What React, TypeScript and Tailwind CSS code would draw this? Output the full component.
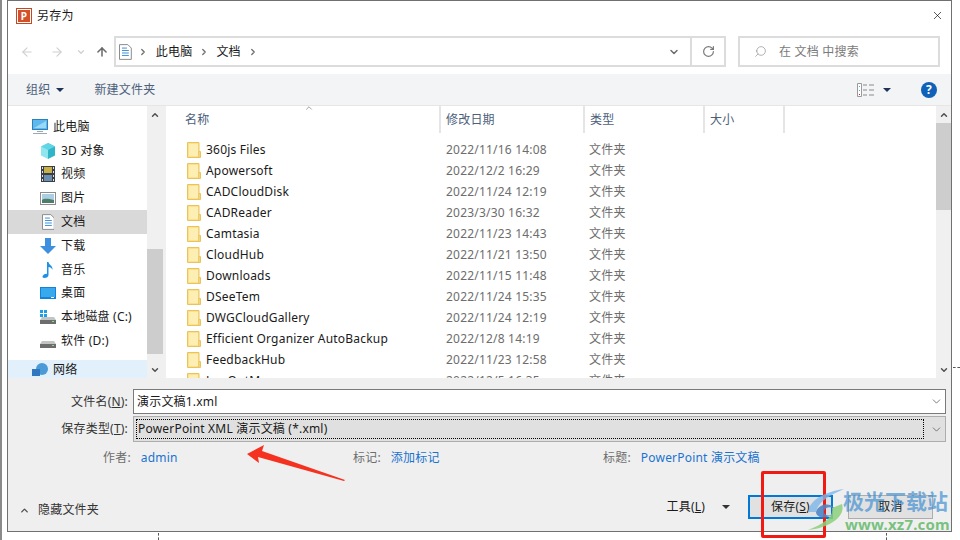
import React from 'react';
import { ArrowLeft, ArrowRight, ArrowUp, ChevronDown, ChevronRight, ChevronUp, RotateCw, Search, X } from 'lucide-react';

const files = [
  ['360js Files', '2022/11/16 14:08'],
  ['Apowersoft', '2022/12/2 16:29'],
  ['CADCloudDisk', '2022/11/24 12:19'],
  ['CADReader', '2023/3/30 16:32'],
  ['Camtasia', '2022/11/23 14:43'],
  ['CloudHub', '2022/11/21 13:50'],
  ['Downloads', '2022/11/15 11:48'],
  ['DSeeTem', '2022/11/24 15:35'],
  ['DWGCloudGallery', '2022/11/24 12:19'],
  ['Efficient Organizer AutoBackup', '2022/12/8 14:19'],
  ['FeedbackHub', '2022/11/23 12:58'],
  ['LogOutMgr', '2022/12/5 16:35'],
];

function FolderIcon() {
  return (
    <svg width="14" height="16" viewBox="0 0 14 16" className="shrink-0">
      <path d="M.5.5h11.5v15H.5z" fill="#fde08a" stroke="#e9c45c" />
      <path d="M12 9.5h1.5v6H12z" fill="#fbe7a6" stroke="#e9c45c" />
      <path d="M2 2h9v12H2z" fill="#fdeeb4" />
    </svg>
  );
}

function DocIcon({ size = 16 }: { size?: number }) {
  return (
    <svg width={size * 0.8} height={size} viewBox="0 0 13 16">
      <path d="M.5.5h8.5l3.5 3.5v11.5H.5z" fill="#fff" stroke="#8a8a8a" />
      <path d="M3 4h5M3 6.5h7M3 9h7M3 11.5h7" stroke="#3d8fd6" />
    </svg>
  );
}

function PcIcon() {
  return (
    <svg width="16" height="15" viewBox="0 0 16 15">
      <rect x="0.5" y="0.5" width="15" height="10" fill="#5cb8ee" stroke="#2f7fb8" />
      <path d="M2 9 14 2v7z" fill="#9ad8f8" />
      <path d="M5 12h6v1H5zM1 14h14v1H1z" fill="#9aa9b5" />
    </svg>
  );
}

function CubeIcon() {
  return (
    <svg width="16" height="16" viewBox="0 0 16 16">
      <path d="M8 0 15 3.5v9L8 16z" fill="#2fb4c8" />
      <path d="M8 0 1 3.5v9L8 16z" fill="#8fe6ee" />
      <path d="M1 3.5 8 7l7-3.5L8 0z" fill="#5fd6e4" />
    </svg>
  );
}

function VideoIcon() {
  return (
    <svg width="14" height="16" viewBox="0 0 14 16">
      <rect width="14" height="16" fill="#3a3f46" />
      <rect x="3" y="1" width="8" height="6" fill="#c9b14a" />
      <rect x="3" y="9" width="8" height="6" fill="#6a8fb0" />
      <path d="M1 1h1v2H1zM1 5h1v2H1zM1 9h1v2H1zM1 13h1v2H1zM12 1h1v2h-1zM12 5h1v2h-1zM12 9h1v2h-1zM12 13h1v2h-1z" fill="#dfe4e8" />
    </svg>
  );
}

function PictureIcon() {
  return (
    <svg width="16" height="13" viewBox="0 0 16 13">
      <rect x="0.5" y="0.5" width="15" height="12" fill="#fff" stroke="#8d8d8d" />
      <rect x="2" y="2" width="12" height="9" fill="#a9cfe4" />
      <path d="M2 8c3-2 6-1 12 0v3H2z" fill="#4f7d6a" />
    </svg>
  );
}

function DownloadIcon() {
  return (
    <svg width="16" height="16" viewBox="0 0 16 16">
      <path d="M5 0h6v8h5l-8 8-8-8h5z" fill="#3d8fe0" />
    </svg>
  );
}

function MusicIcon() {
  return (
    <svg width="12" height="16" viewBox="0 0 12 16">
      <path d="M5 0h1.500c.5 3 4.500 3.500 4 8C10 6 8 5 6.500 5v8c0 2-2 3-4 3S0 14.500 1 13.500 3.500 11.500 5 12z" fill="#1e90e6" />
    </svg>
  );
}

function DesktopIcon() {
  return (
    <svg width="16" height="12" viewBox="0 0 16 12">
      <rect width="16" height="12" fill="#1283d8" />
      <rect x="1" y="1" width="14" height="9" fill="#39a9ee" />
      <rect x="11" y="10" width="3" height="1" fill="#fff" />
    </svg>
  );
}

function DiskIcon({ win }: { win?: boolean }) {
  return (
    <svg width="16" height="14" viewBox="0 0 16 14">
      {win && <path d="M0 0h3v3H0zM4 0h3v3H4zM0 4h3v3H0zM4 4h3v3H4z" fill="#18a0e8" />}
      <path d="M2 7h12l2 3v3H0v-3z" fill="#c4c4c4" />
      <rect y="10" width="16" height="4" fill="#6d6d6d" />
      <rect x="12" y="11" width="2" height="1" fill="#7fe07f" />
    </svg>
  );
}

function NetworkIcon() {
  return (
    <svg width="16" height="14" viewBox="0 0 16 14">
      <circle cx="10" cy="6" r="6" fill="#4a9ad8" />
      <rect y="6" width="8" height="7" fill="#2f78c0" />
    </svg>
  );
}

function SideItem({ icon, label, active, indent = true }: { icon: React.ReactNode; label: string; active?: boolean; indent?: boolean }) {
  return (
    <div className={`flex h-6 items-center ${indent ? 'pl-[32px]' : 'pl-[24px]'} ${active ? 'bg-[#d9d9d9]' : ''}`}>
      <span className="flex w-4 justify-center">{icon}</span>
      <span className="ml-[5px] text-[#1a1a1a]">{label}</span>
    </div>
  );
}

function Field({ label, value, className }: { label: string; value: string; className: string }) {
  return (
    <div className={`flex items-center gap-[10px] ${className}`}>
      <span className="text-[#6d6d6d]">{label}</span>
      <span className="text-[#1a73d0]">{value}</span>
    </div>
  );
}

export default function App() {
  return (
    <div
      className="relative h-[540px] w-[960px] overflow-hidden bg-white text-[12px] tracking-[0.2px]"
      style={{ fontFamily: '"Noto Sans", "Noto Sans CJK SC", sans-serif' }}
    >
      {/* dialog */}
      <div className="ml-[7px] flex h-[532px] w-[945px] flex-col border border-[#707070] bg-white">
        {/* title */}
        <div className="flex h-[29px] shrink-0 items-center pl-[8px] pr-[7px]">
          <span className="flex h-4 w-4 items-center justify-center border border-[#c9461f] bg-white">
            <span className="flex h-3 w-3 items-center justify-center bg-[#d2502a] text-[10px] font-bold leading-none text-white">P</span>
          </span>
          <span className="ml-[5px] text-[#1a1a1a]">另存为</span>
          <X size={13} strokeWidth={1.2} className="ml-auto text-black" />
        </div>

        {/* nav */}
        <div className="mt-[6px] flex h-[31px] shrink-0 items-center pl-[12px]">
          <ArrowLeft size={14} className="text-[#d0d0d0]" />
          <ArrowRight size={14} className="ml-[16px] text-[#d0d0d0]" />
          <ChevronDown size={10} strokeWidth={3} className="ml-[12px] text-[#d0d0d0]" />
          <ArrowUp size={14} strokeWidth={2.6} className="ml-[9px] text-[#6a6a6a]" />
          <div className="ml-[5px] flex h-[31px] w-[612px] items-center border-2 border-[#dcdcdc] pl-[3px]">
            <DocIcon />
            <ChevronRight size={10} strokeWidth={3} className="ml-[6px] text-[#6d6d6d]" />
            <span className="ml-[8px] text-[#1a1a1a]">此电脑</span>
            <ChevronRight size={10} strokeWidth={3} className="ml-[7px] text-[#6d6d6d]" />
            <span className="ml-[7px] text-[#1a1a1a]">文档</span>
            <ChevronRight size={10} strokeWidth={3} className="ml-[7px] text-[#6d6d6d]" />
            <ChevronDown size={12} strokeWidth={3} className="ml-auto mr-[10px] text-[#6d6d6d]" />
            <div className="flex h-full w-[34px] items-center justify-center border-l-2 border-[#dcdcdc]">
              <RotateCw size={13} strokeWidth={2.2} className="text-[#7a7a7a]" />
            </div>
          </div>
          <div className="ml-[12px] flex h-[31px] w-[202px] items-center border-2 border-[#dcdcdc] pl-[14px] text-[#7a7a7a]">
            <Search size={13} strokeWidth={1.2} className="-scale-x-100 text-[#8a8a8a]" />
            <span className="ml-[12px]">在 文档 中搜索</span>
          </div>
        </div>

        {/* toolbar */}
        <div className="mt-[7px] flex h-[32px] shrink-0 items-center border-b border-[#e6e6e6] bg-[#f3f4f6] pl-[18px] pr-[14px] text-[#4c607a]">
          <span>组织</span>
          <span className="ml-[6px] h-0 w-0 border-x-[4px] border-t-[4px] border-x-transparent border-t-[#1f3358]" />
          <span className="ml-[30px]">新建文件夹</span>
          <svg width="17" height="14" viewBox="0 0 17 14" className="ml-auto">
            <path d="M.5.5h4v13h-4z" fill="#fff" stroke="#9a9a9a" />
            <path d="M2 3h1v1H2zM2 7h1v1H2z" fill="#6aa0d8" />
            <path d="M2 11h1v1H2z" fill="#e02020" />
            <path d="M6 2h4M12 2h5M6 7h4M12 7h5M6 12h4M12 12h5" stroke="#8a8a8a" />
          </svg>
          <span className="ml-[9px] h-0 w-0 border-x-[4px] border-t-[4px] border-x-transparent border-t-[#1f3358]" />
          <span className="ml-[30px] flex h-4 w-4 items-center justify-center rounded-full bg-[#0f62b8] text-[12px] font-bold leading-none text-white">?</span>
        </div>

        {/* body */}
        <div className="flex min-h-0 flex-1">
          <div className="flex h-full w-[139px] shrink-0 flex-col overflow-hidden pt-[9px]">
            <SideItem icon={<PcIcon />} label="此电脑" indent={false} />
            <SideItem icon={<CubeIcon />} label="3D 对象" />
            <SideItem icon={<VideoIcon />} label="视频" />
            <SideItem icon={<PictureIcon />} label="图片" />
            <SideItem icon={<DocIcon />} label="文档" active />
            <SideItem icon={<DownloadIcon />} label="下载" />
            <SideItem icon={<MusicIcon />} label="音乐" />
            <SideItem icon={<DesktopIcon />} label="桌面" />
            <SideItem icon={<DiskIcon win />} label="本地磁盘 (C:)" />
            <SideItem icon={<DiskIcon />} label="软件 (D:)" />
            <div className="mt-[7px] flex-1 bg-[#e1f0fb] pl-[24px] pt-[2px]">
              <div className="flex h-[16px] items-center">
                <NetworkIcon />
                <span className="ml-[5px] text-[#1a1a1a]">网络</span>
              </div>
            </div>
          </div>

          {/* side scrollbar */}
          <div className="flex w-[16px] shrink-0 flex-col bg-[#f0f0f0]">
            <div className="flex h-[17px] items-center justify-center">
              <ChevronUp size={10} strokeWidth={3.5} className="text-[#505050]" />
            </div>
            <div className="mt-[126px] h-[105px] bg-[#cdcdcd]" />
            <div className="mt-auto flex h-[17px] items-center justify-center">
              <ChevronDown size={10} strokeWidth={3.5} className="text-[#505050]" />
            </div>
          </div>
          <div className="w-[3px] shrink-0 bg-[#f0f0f0]" />

          {/* file list */}
          <div className="flex min-w-0 flex-1 flex-col overflow-hidden">
            <div className="relative flex h-[27px] shrink-0 text-[#4c607a]">
              <ChevronUp size={10} strokeWidth={1.5} className="absolute left-[138px] top-[-3px] text-[#6d6d6d]" />
              <div className="flex w-[275px] items-center border-r-2 border-[#e5e5e5] pl-[19px]">名称</div>
              <div className="flex w-[144px] items-center border-r-2 border-[#e5e5e5] pl-[5px]">修改日期</div>
              <div className="flex w-[120px] items-center border-r-2 border-[#e5e5e5] pl-[5px]">类型</div>
              <div className="flex w-[80px] items-center border-r-2 border-[#e5e5e5] pl-[5px]">大小</div>
            </div>
            <div className="mt-[6px]">
              {files.map(([name, date]) => (
                <div key={name} className="flex h-[21px] items-center">
                  <div className="flex w-[273px] items-center pl-[21px] text-[#1a1a1a]">
                    <FolderIcon />
                    <span className="ml-[5px]">{name}</span>
                  </div>
                  <div className="w-[143px] pl-[7px] text-[#6d6d6d]">{date}</div>
                  <div className="pl-[7px] text-[#6d6d6d]">文件夹</div>
                </div>
              ))}
            </div>
          </div>

          {/* list scrollbar */}
          <div className="flex w-[15px] shrink-0 flex-col bg-white">
            <div className="flex h-[17px] items-center justify-center bg-[#f0f0f0]">
              <ChevronUp size={10} strokeWidth={3.5} className="text-[#505050]" />
            </div>
            <div className="h-[87px] bg-[#cdcdcd]" />
            <div className="flex-1 bg-[#f0f0f0]" />
            <div className="flex h-[17px] items-center justify-center bg-[#f0f0f0]">
              <ChevronDown size={10} strokeWidth={3.5} className="text-[#505050]" />
            </div>
          </div>
        </div>

        {/* save panel */}
        <div className="flex h-[153px] shrink-0 flex-col bg-[#efefef] pl-[5px] pr-[5px] pt-[11px]">
          <div className="flex items-center">
            <span className="w-[115px] text-right text-[#333]">文件名(<u>N</u>):</span>
            <div className="ml-[5px] flex h-[25px] flex-1 items-center border border-[#7a7a7a] bg-white pl-[3px] pr-[2px] text-[#1a1a1a]">
              演示文稿1.xml
              <ChevronDown size={13} strokeWidth={1.4} className="ml-auto text-[#555]" />
            </div>
          </div>
          <div className="mt-[2px] flex items-center">
            <span className="w-[115px] text-right text-[#333]">保存类型(<u>T</u>):</span>
            <div className="ml-[5px] flex h-[26px] flex-1 items-center border border-[#adadad] bg-[#e0e0e0] pl-[2px] pr-[2px] text-[#1a1a1a]">
              <div className="flex h-[20px] flex-1 items-center border border-dotted border-black pl-[1px]">PowerPoint XML 演示文稿 (*.xml)</div>
              <ChevronDown size={13} strokeWidth={1.4} className="ml-[6px] text-[#555]" />
            </div>
          </div>
          <div className="mt-[7px] flex h-[18px]">
            <Field label="作者:" value="admin" className="ml-[90px] w-[250px]" />
            <Field label="标记:" value="添加标记" className="w-[250px]" />
            <Field label="标题:" value="PowerPoint 演示文稿" className="" />
          </div>
          <div className="mt-auto mb-[12px] flex items-center">
            <div className="mt-[7px] flex items-center">
              <ChevronUp size={11} strokeWidth={3} className="ml-[6px] text-[#505050]" />
              <span className="ml-[8px] text-[#333]">隐藏文件夹</span>
            </div>
            <span className="ml-auto text-[#1a1a1a]">工具(<u>L</u>)</span>
            <span className="ml-[17px] h-0 w-0 border-x-[4px] border-t-[4px] border-x-transparent border-t-[#333]" />
            <div className="ml-[18px] flex h-[24px] w-[85px] items-center justify-center border-2 border-[#0078d7] bg-[#e1e1e1] text-[#1a1a1a]">保存(<u>S</u>)</div>
            <div className="ml-[15px] mr-[13px] flex h-[24px] w-[85px] items-center justify-center border border-[#adadad] bg-[#e1e1e1] text-[#1a1a1a]">取消</div>
          </div>
        </div>
      </div>

      {/* dashed leftovers of the window behind */}
      <div className="absolute left-0 top-0 h-full w-[2px] bg-[#8a8a8a]" />
      <div className="absolute left-[158px] top-[533px] h-[7px] border-l border-dashed border-[#555]" />
      <div className="absolute left-[886px] top-[533px] h-[7px] border-l border-dashed border-[#555]" />
      <div className="absolute left-[953px] top-[367px] w-[7px] border-t border-dashed border-[#555]" />

      {/* annotation */}
      <svg className="absolute left-[240px] top-[445px]" width="110" height="40" viewBox="0 0 110 40">
        <path d="M7 9 24 0l-2 6 83 29-1 1-86-24 1 6z" fill="#f5311f" />
      </svg>
      <div className="absolute left-[761px] top-[471px] h-[67px] w-[65px] rounded-[2px] border-[3px] border-[#f01a12]" />

      {/* watermark */}
      <svg className="absolute left-[800px] top-[488px]" width="46" height="44" viewBox="0 0 46 44">
        <path d="M8 24C10 12 24 4 44 1 28 8 18 14 16 24z" fill="#7db6e8" opacity="0.8" />
        <path d="M42 16c4 12-12 24-34 26 14-6 26-12 24-22z" fill="#8ccf7a" opacity="0.85" />
        <path d="M16 24c2-8 14-10 18-4-6-2-10 0-10 4 0 3 4 4 8 3-6 4-16 3-16-3z" fill="#4f86c6" opacity="0.9" />
      </svg>
      <div className="absolute left-[843px] top-[488px] text-[21px] font-bold leading-[26px] tracking-normal text-[#3f8fd2]/70">极光下载站</div>
      <div className="absolute left-[845px] top-[515px] text-[15px] font-bold leading-[18px] tracking-[0.2px] text-[#62b96a]/85">www.xz7.com</div>
    </div>
  );
}
